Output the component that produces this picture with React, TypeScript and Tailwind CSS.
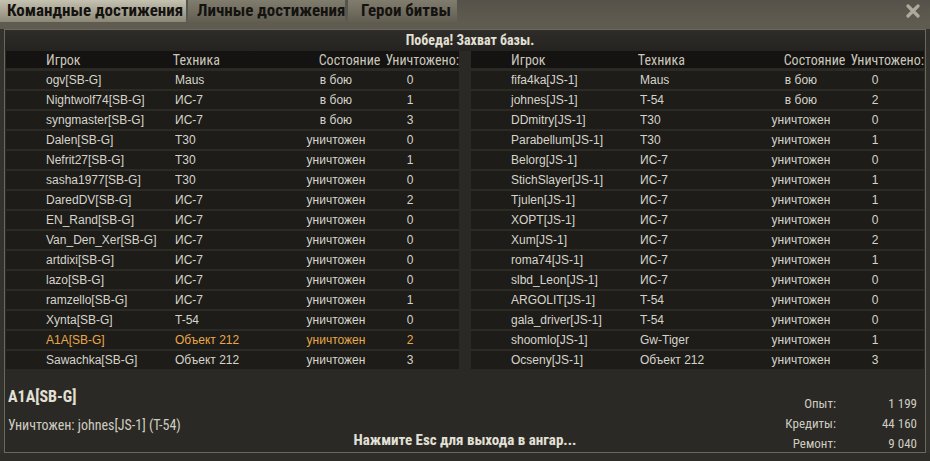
import React from 'react';

interface Row {
  name: string;
  tank: string;
  state: string;
  kills: number;
  me?: boolean;
}

const left: Row[] = [
  { name: 'ogv[SB-G]', tank: 'Maus', state: 'в бою', kills: 0 },
  { name: 'Nightwolf74[SB-G]', tank: 'ИС-7', state: 'в бою', kills: 1 },
  { name: 'syngmaster[SB-G]', tank: 'ИС-7', state: 'в бою', kills: 3 },
  { name: 'Dalen[SB-G]', tank: 'T30', state: 'уничтожен', kills: 0 },
  { name: 'Nefrit27[SB-G]', tank: 'T30', state: 'уничтожен', kills: 1 },
  { name: 'sasha1977[SB-G]', tank: 'T30', state: 'уничтожен', kills: 0 },
  { name: 'DaredDV[SB-G]', tank: 'ИС-7', state: 'уничтожен', kills: 2 },
  { name: 'EN_Rand[SB-G]', tank: 'ИС-7', state: 'уничтожен', kills: 0 },
  { name: 'Van_Den_Xer[SB-G]', tank: 'ИС-7', state: 'уничтожен', kills: 0 },
  { name: 'artdixi[SB-G]', tank: 'ИС-7', state: 'уничтожен', kills: 0 },
  { name: 'lazo[SB-G]', tank: 'ИС-7', state: 'уничтожен', kills: 0 },
  { name: 'ramzello[SB-G]', tank: 'ИС-7', state: 'уничтожен', kills: 1 },
  { name: 'Xynta[SB-G]', tank: 'T-54', state: 'уничтожен', kills: 0 },
  { name: 'A1A[SB-G]', tank: 'Объект 212', state: 'уничтожен', kills: 2, me: true },
  { name: 'Sawachka[SB-G]', tank: 'Объект 212', state: 'уничтожен', kills: 3 },
];

const right: Row[] = [
  { name: 'fifa4ka[JS-1]', tank: 'Maus', state: 'в бою', kills: 0 },
  { name: 'johnes[JS-1]', tank: 'T-54', state: 'в бою', kills: 2 },
  { name: 'DDmitry[JS-1]', tank: 'T30', state: 'уничтожен', kills: 0 },
  { name: 'Parabellum[JS-1]', tank: 'T30', state: 'уничтожен', kills: 1 },
  { name: 'Belorg[JS-1]', tank: 'ИС-7', state: 'уничтожен', kills: 0 },
  { name: 'StichSlayer[JS-1]', tank: 'ИС-7', state: 'уничтожен', kills: 1 },
  { name: 'Tjulen[JS-1]', tank: 'ИС-7', state: 'уничтожен', kills: 1 },
  { name: 'XOPT[JS-1]', tank: 'ИС-7', state: 'уничтожен', kills: 0 },
  { name: 'Xum[JS-1]', tank: 'ИС-7', state: 'уничтожен', kills: 2 },
  { name: 'roma74[JS-1]', tank: 'ИС-7', state: 'уничтожен', kills: 1 },
  { name: 'slbd_Leon[JS-1]', tank: 'ИС-7', state: 'уничтожен', kills: 0 },
  { name: 'ARGOLIT[JS-1]', tank: 'T-54', state: 'уничтожен', kills: 0 },
  { name: 'gala_driver[JS-1]', tank: 'T-54', state: 'уничтожен', kills: 0 },
  { name: 'shoomlo[JS-1]', tank: 'Gw-Tiger', state: 'уничтожен', kills: 1 },
  { name: 'Ocseny[JS-1]', tank: 'Объект 212', state: 'уничтожен', kills: 3 },
];

// condensed headline face
const narrow = "font-['Roboto',sans-serif] font-stretch-condensed";

function TeamTable({ rows }: { rows: Row[] }) {
  return (
    <div className="flex w-[453px] flex-col">
      <div className={`flex h-[17px] items-center whitespace-nowrap bg-[#141311] pt-[2px] text-[14px] text-[#c9c6ba] ${narrow}`}>
        <span className="w-[169px] pl-[40px]">Игрок</span>
        <span className="w-[105px]">Техника</span>
        <span className="w-[106px] text-right">Состояние</span>
        <span className="ml-[5px]">Уничтожено:</span>
      </div>
      <div className="mt-[1px] flex flex-col">
        {rows.map((r) => (
          <div
            key={r.name}
            className={`flex h-[20px] items-center border-t-2 border-[#2b2a25] bg-[#1d1c19] text-[12px] font-['Liberation_Sans',Arial,sans-serif] ${
              r.me ? 'text-[#e9a847]' : 'text-[#d6d4ca]'
            }`}
          >
            <span className="w-[169px] pl-[40px]">{r.name}</span>
            <span className="w-[105px]">{r.tank}</span>
            <span className="w-[112px] text-center">{r.state}</span>
            <span className="w-[36px] text-center">{r.kills}</span>
          </div>
        ))}
      </div>
    </div>
  );
}

export default function App() {
  return (
    <div className={`flex h-[461px] w-[930px] flex-col bg-[#34322c] ${narrow}`}>
      {/* tabs */}
      <div className="flex h-[22px] items-stretch whitespace-nowrap bg-gradient-to-b from-[#55524a] to-[#5f5b50]">
        <div className="flex w-[186px] items-center bg-gradient-to-b from-[#c6c2b1] to-[#8c8878] pl-[7px] text-[17px] font-bold text-[#141310]">
          Командные достижения
        </div>
        <div className="ml-[2px] flex w-[157px] items-center bg-gradient-to-b from-[#817d6e] to-[#625e52] pl-[9px] text-[17px] font-bold text-[#141310]">
          Личные достижения
        </div>
        <div className="ml-[3px] flex w-[109px] items-center bg-gradient-to-b from-[#817d6e] to-[#625e52] pl-[13px] text-[17px] font-bold text-[#141310]">
          Герои битвы
        </div>
        <div className="flex flex-1 items-center justify-end pr-[10px]">
          <svg width="14" height="14" viewBox="0 0 14 14">
            <path d="M2 2 L12 12 M12 2 L2 12" stroke="#aeab9d" strokeWidth="3.2" strokeLinecap="round" />
          </svg>
        </div>
      </div>
      <div className="h-[7px] bg-[#5f5b50]" />

      {/* main panel */}
      <div className="mx-[4px] flex h-[424px] flex-col border border-[#6c685b] bg-[#2a2925]">
        <div className="flex h-[22px] items-center justify-center bg-gradient-to-b from-[#2e2d29] to-[#24231f] pl-[10px] text-[14px] font-bold text-[#e3e0d6]">
          Победа! Захват базы.
        </div>
        <div className="flex justify-between px-[1px]">
          <TeamTable rows={left} />
          <TeamTable rows={right} />
        </div>

        {/* bottom summary */}
        <div className="flex flex-1 items-stretch whitespace-nowrap pt-[18px]">
          <div className="flex w-[300px] flex-col pl-[3px]">
            <span className="text-[16px] font-bold leading-[20px] text-[#e3e0d6]">A1A[SB-G]</span>
            <span className="mt-[10px] text-[14px] leading-[16px] text-[#cfccc0]">Уничтожен: johnes[JS-1] (T-54)</span>
          </div>
          <div className="flex flex-1 items-end justify-center pb-[3px] text-[15px] font-bold text-[#e3e0d6]">
            Нажмите Esc для выхода в ангар...
          </div>
          <div className="flex w-[300px] flex-col items-end justify-center pr-[8px] pt-[7px] text-[13px] leading-[20px] text-[#cfccc0]">
            {[
              ['Опыт:', '1 199'],
              ['Кредиты:', '44 160'],
              ['Ремонт:', '9 040'],
            ].map(([k, v]) => (
              <div key={k} className="flex">
                <span className="text-right">{k}</span>
                <span className="w-[81px] text-right">{v}</span>
              </div>
            ))}
          </div>
        </div>
      </div>
      <div className="flex-1 bg-[#2f2d28]" />
    </div>
  );
}
